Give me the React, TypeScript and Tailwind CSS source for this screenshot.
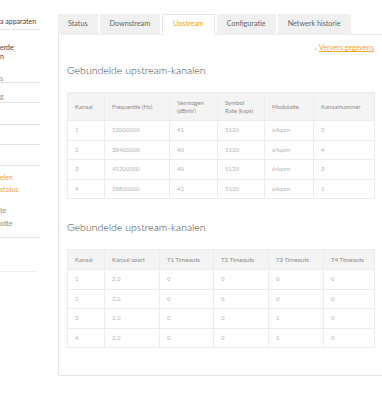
import { FC } from "react";

const tabs = ["Status", "Downstream", "Upstream", "Configuratie", "Netwerk historie"];

const upstream = [
  ["1", "52000000", "41", "5120", "64qam", "2"],
  ["2", "38400000", "40", "5120", "64qam", "4"],
  ["3", "45200000", "40", "5120", "64qam", "3"],
  ["4", "58800000", "41", "5120", "64qam", "1"],
];

const timeouts = [
  ["1", "2.0", "0", "0", "0", "0"],
  ["2", "2.0", "0", "0", "0", "0"],
  ["3", "2.0", "0", "0", "1", "0"],
  ["4", "2.0", "0", "0", "1", "0"],
];

const widths1 = ["w-[37px]", "w-[65px]", "w-[48px]", "w-[47px]", "w-[49px]", "w-[61px]"];
const widths2 = ["w-[37px]", "w-[55px]", "w-[54px]", "w-[55px]", "w-[55px]", "w-[51px]"];

const Sidebar: FC = () => {
  return (
    <div className="w-[40px] shrink-0 flex flex-col text-[7px] leading-[9px] text-[#444]">
      <div className="h-[30px] border-b border-[#e2e2e2] pt-[17px]">a apparaten</div>
      <div className="h-[53px] border-b border-[#e2e2e2] pt-[13px]">
        <div>erde</div>
        <div>n</div>
        <div className="mt-[13px] text-[#888]">s</div>
      </div>
      <div className="h-[20px] border-b border-[#e2e2e2] pt-[9px] text-[#888]">g</div>
      <div className="h-[22px] border-b border-[#e2e2e2]"></div>
      <div className="h-[20px] border-b border-[#e2e2e2]"></div>
      <div className="h-[21px] border-b border-[#e2e2e2]"></div>
      <div className="h-[72px] border-b border-[#e2e2e2] pt-[7px]">
        <div className="text-[#f0a32c]">elen</div>
        <div className="text-[#f0a32c] mt-[3px]">status</div>
        <div className="mt-[12px] text-[#888]">te</div>
        <div className="mt-[4px] text-[#888]">otte</div>
      </div>
      <div className="h-[34px] w-[37px] border-b border-[#eeeeee]"></div>
    </div>
  );
};

const DataTable: FC<{ head: React.ReactNode[]; rows: string[][]; widths: string[]; headH: string }> = ({ head, rows, widths, headH }) => {
  return (
    <table className="table-fixed border-collapse w-[307px] text-[6px] leading-[8px]">
      <thead>
        <tr className={headH + " bg-[#f4f4f4]"}>
          {head.map((h, i) => (
            <th key={i} className={widths[i] + " border border-[#ececec] px-[7px] text-left font-normal text-[#8a8a8a]"}>
              {h}
            </th>
          ))}
        </tr>
      </thead>
      <tbody>
        {rows.map((r, i) => (
          <tr key={i} className="h-[19.5px]">
            {r.map((c, j) => (
              <td key={j} className="border border-[#ececec] px-[7px] text-[#b4b4b4]">
                {c}
              </td>
            ))}
          </tr>
        ))}
      </tbody>
    </table>
  );
};

const App: FC = () => {
  return (
    <div className="w-[382px] h-[400px] overflow-hidden bg-white flex gap-[18px] font-['Lato',sans-serif]">
      <Sidebar />
      <div className="w-[340px] shrink-0 pt-[14px]">
        {/* tabs */}
        <div className="flex gap-[2px] h-[21px] text-[7.2px]">
          {tabs.map((t) => (
            <div
              key={t}
              className={
                t === "Upstream"
                  ? "px-[10px] flex items-center bg-white text-[#f0a32c] border border-[#e6e6e6] border-b-white relative z-10"
                  : "px-[10px] flex items-center bg-[#f0f0f0] text-[#666]"
              }
            >
              {t}
            </div>
          ))}
        </div>
        <div className="-mt-px h-[342px] border border-[#e6e6e6] pl-[8px] pt-[8px]">
          <div className="w-[307px] flex justify-end items-center text-[7.2px] leading-[10px] text-[#f0a32c]">
            <span className="mr-[2px] text-[8px]">›</span>
            <span className="underline">Ververs gegevens</span>
          </div>
          <h2 className="mt-[10px] text-[10.5px] leading-[14px] text-[#444] font-light">Gebundelde upstream-kanalen</h2>
          <div className="mt-[15px]">
            <DataTable
              headH="h-[28px]"
              widths={widths1}
              head={[
                "Kanaal",
                "Frequentie (Hz)",
                <>Vermogen<br />(dBmV)</>,
                <>Symbol<br />Rate (ksps)</>,
                "Modulatie",
                "Kanaalnummer",
              ]}
              rows={upstream}
            />
          </div>
          <h2 className="mt-[21px] text-[10.5px] leading-[14px] text-[#444] font-light">Gebundelde upstream-kanalen</h2>
          <div className="mt-[15px]">
            <DataTable
              headH="h-[20px]"
              widths={widths2}
              head={["Kanaal", "Kanaal soort", "T1 Timeouts", "T2 Timeouts", "T3 Timeouts", "T4 Timeouts"]}
              rows={timeouts}
            />
          </div>
        </div>
      </div>
    </div>
  );
};

export default App;
